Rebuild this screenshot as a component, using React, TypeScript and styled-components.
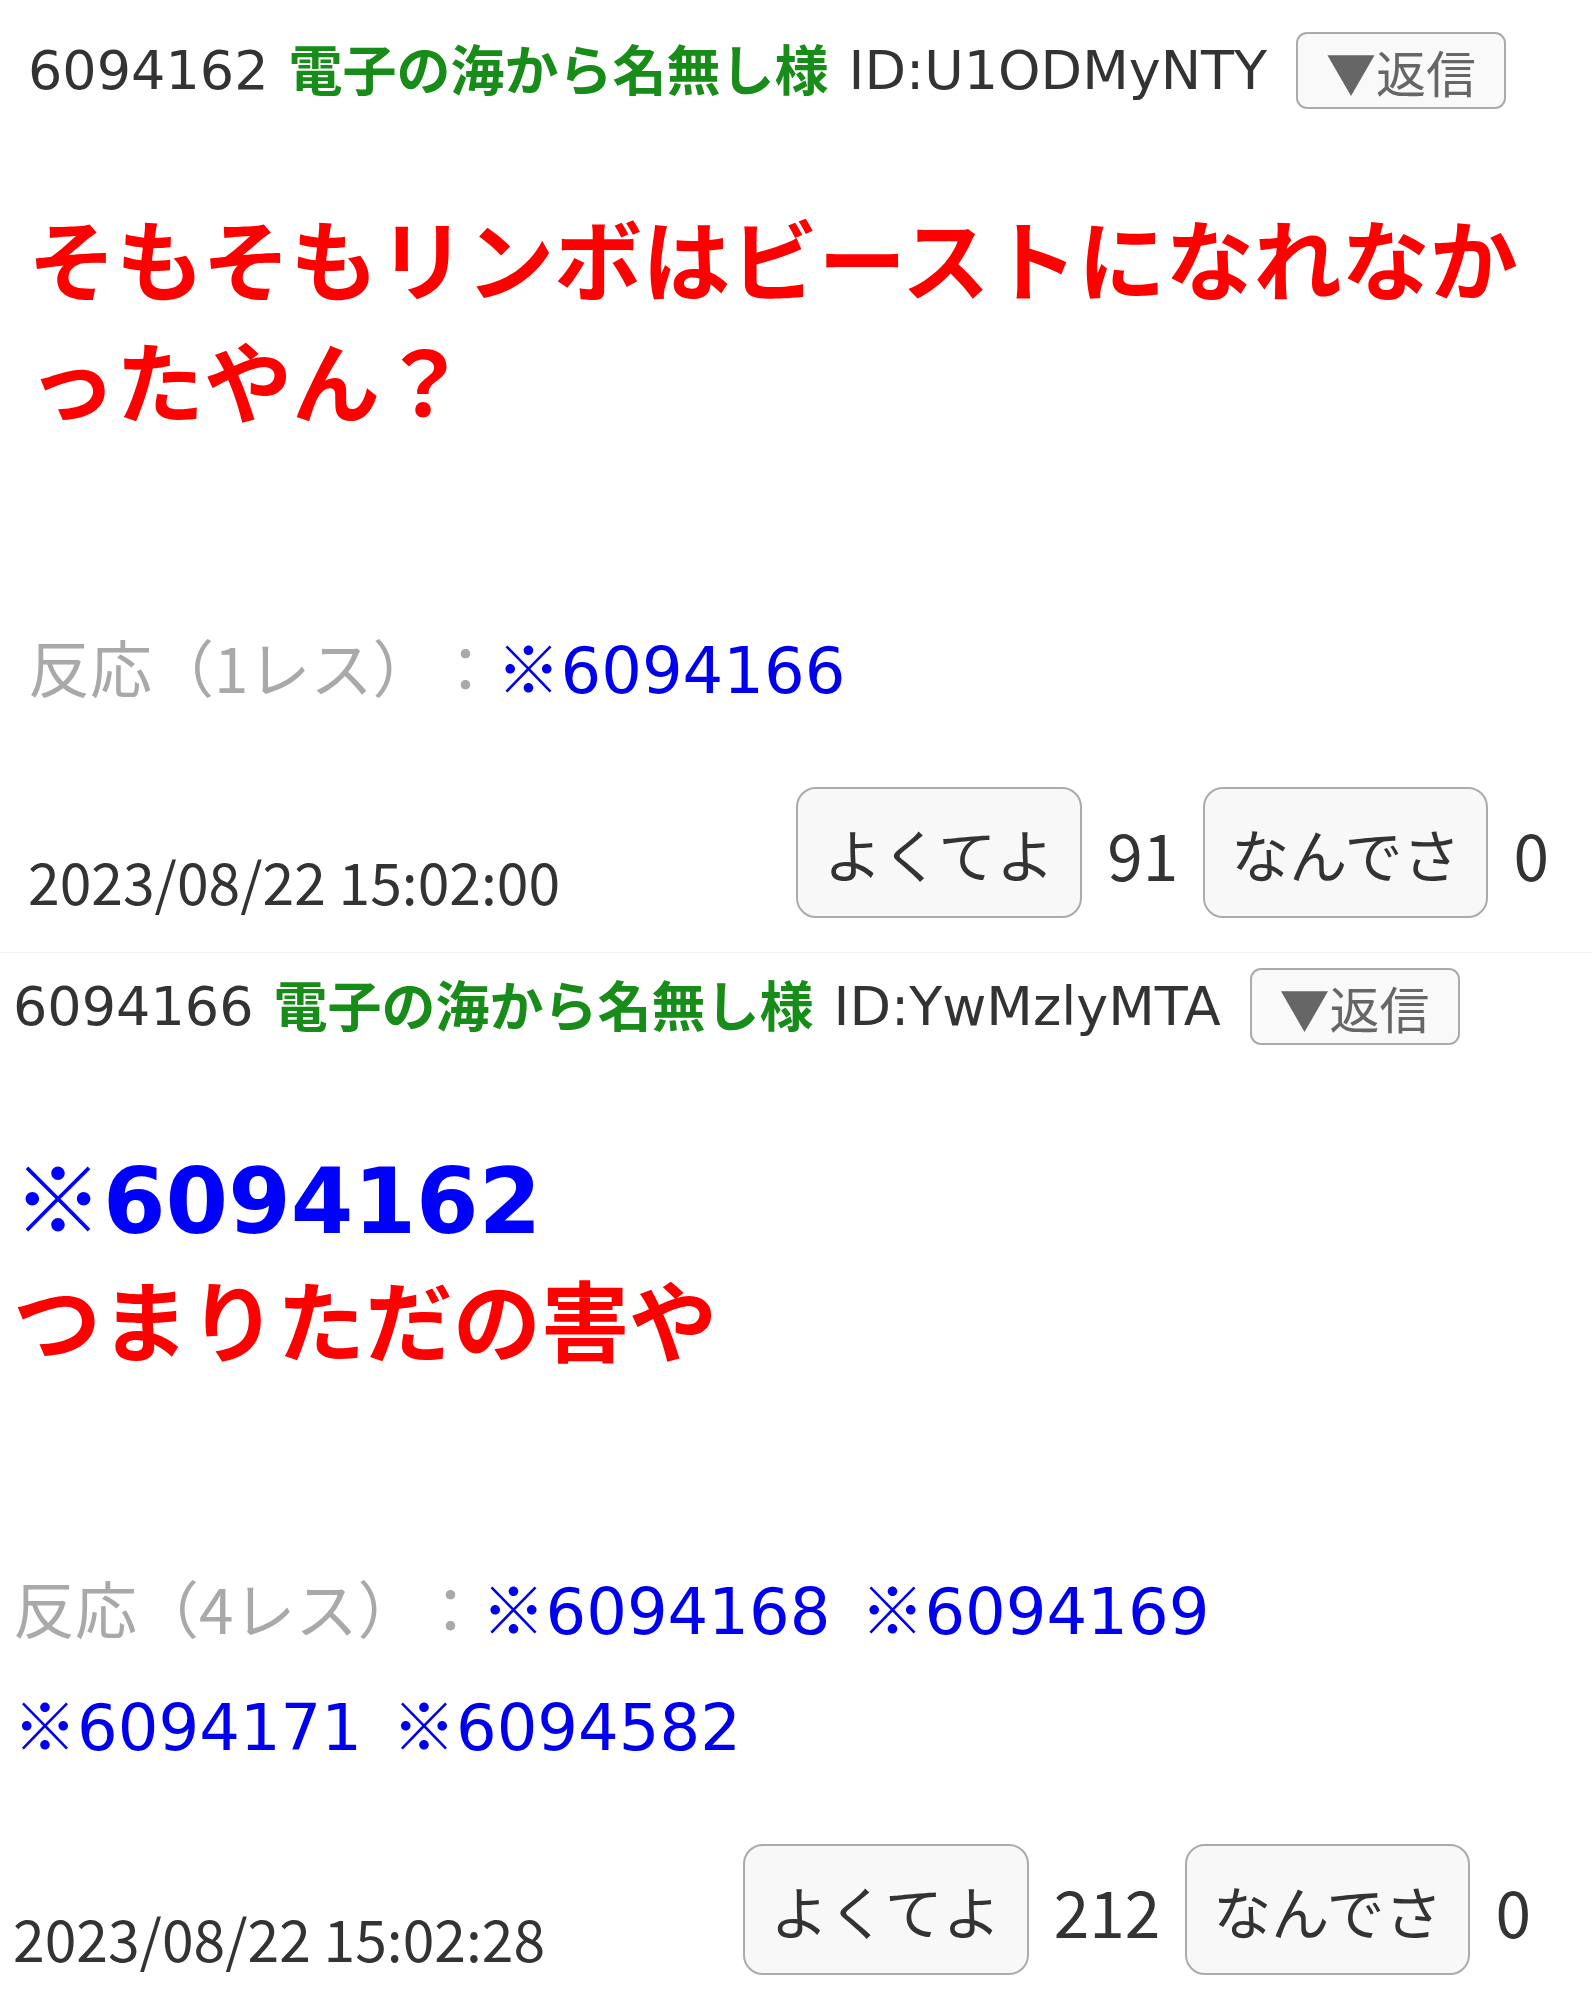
import React from "react";
import styled, { createGlobalStyle } from "styled-components";

const LATIN = `"DejaVu Sans", "Noto Sans CJK JP", sans-serif`;
const CJK = `"Noto Sans CJK JP", sans-serif`;

const GlobalStyle = createGlobalStyle`
  html, body {
    margin: 0;
    padding: 0;
    background: #ffffff;
  }
  body {
    font-family: ${CJK};
    color: #333333;
    text-spacing-trim: space-all;
  }
  button {
    cursor: pointer;
  }
`;

const Page = styled.main`
  width: 1592px;
  display: flex;
  flex-direction: column;
`;

const Post = styled.article<{
  $left: number;
  $right: number;
  $top: number;
  $bottom: number;
  $divider?: boolean;
}>`
  padding: ${(p) => p.$top}px ${(p) => p.$right}px ${(p) => p.$bottom}px
    ${(p) => p.$left}px;
  border-top: ${(p) => (p.$divider ? "1px solid #f0f0f0" : "none")};
`;

const Header = styled.header`
  display: flex;
  align-items: center;
  gap: 20px;
  height: 77px;
  font-family: ${LATIN};
  font-size: 54px;
  color: #333333;
  white-space: nowrap;
`;

const ResNo = styled.span``;

const Name = styled.span`
  font-family: ${CJK};
  font-weight: 700;
  color: #188c18;
  position: relative;
  top: -3px;
`;

const UserId = styled.span``;

const ReplyButton = styled.button`
  margin-left: 9px;
  width: 210px;
  height: 77px;
  box-sizing: border-box;
  padding: 0;
  border: 2px solid #ababab;
  border-radius: 11px;
  background: #f9f9f9;
  display: flex;
  align-items: center;
  justify-content: center;
  font-family: ${CJK};
  font-size: 50px;
  line-height: 1;
  color: #666666;
`;

const Body = styled.div<{ $gap: number }>`
  margin-top: ${(p) => p.$gap}px;
  font-family: ${CJK};
  font-weight: 700;
  font-size: 88px;
  line-height: 122px;
  color: #ff0000;
  line-break: anywhere;
  word-break: break-all;
`;

const BigAnchor = styled.a`
  color: #0000ff;
  text-decoration: none;
  font-family: ${LATIN};
  font-weight: 700;
  font-size: 90px;
  line-height: 1;
`;

const Mark = styled.span`
  font-family: ${CJK};
  font-weight: 400;
`;

const Reactions = styled.div<{ $gap: number }>`
  margin-top: ${(p) => p.$gap}px;
  font-family: ${CJK};
  font-size: 62px;
  line-height: 116px;
  word-spacing: 16px;
`;

const ReactionLabel = styled.span`
  color: #a9a9a9;
`;

const ReactionLink = styled.a`
  color: #0000ee;
  text-decoration: none;
  font-family: ${LATIN};
  font-size: 64px;
  line-height: 1;
`;

const Footer = styled.footer`
  margin-top: 63px;
  display: flex;
  justify-content: space-between;
  align-items: flex-end;
`;

const Timestamp = styled.time`
  font-family: ${CJK};
  font-size: 57px;
  line-height: 72px;
  color: #333333;
  margin-bottom: 2px;
`;

const Votes = styled.div`
  display: flex;
  align-items: center;
  gap: 25px;
`;

const VoteButton = styled.button`
  height: 131px;
  box-sizing: border-box;
  padding: 0 26px;
  border: 2px solid #ababab;
  border-radius: 20px;
  background: #f8f8f8;
  font-family: ${CJK};
  font-size: 58px;
  line-height: 1;
  color: #333333;
`;

const VoteCount = styled.span`
  font-family: ${CJK};
  font-size: 64px;
  color: #333333;
`;

type PostData = {
  no: string;
  id: string;
  quote?: string;
  lines: string[];
  reactions: string[];
  date: string;
  good: number;
  bad: number;
  left: number;
  right: number;
  top: number;
  bottom: number;
  divider?: boolean;
  bodyGap: number;
  reactGap: number;
};

const posts: PostData[] = [
  {
    no: "6094162",
    id: "ID:U1ODMyNTY",
    lines: ["そもそもリンボはビーストになれなかったやん？"],
    reactions: ["6094166"],
    date: "2023/08/22 15:02:00",
    good: 91,
    bad: 0,
    left: 28,
    right: 43,
    top: 32,
    bottom: 34,
    bodyGap: 86,
    reactGap: 169,
  },
  {
    no: "6094166",
    id: "ID:YwMzlyMTA",
    quote: "6094162",
    lines: ["つまりただの害や"],
    reactions: ["6094168", "6094169", "6094171", "6094582"],
    date: "2023/08/22 15:02:28",
    good: 212,
    bad: 0,
    left: 13,
    right: 61,
    top: 15,
    bottom: 27,
    divider: true,
    bodyGap: 89,
    reactGap: 171,
  },
];

function PostView({ post }: { post: PostData }) {
  return (
    <Post
      $left={post.left}
      $right={post.right}
      $top={post.top}
      $bottom={post.bottom}
      $divider={post.divider}
    >
      <Header>
        <ResNo>{post.no}</ResNo>
        <Name>電子の海から名無し様</Name>
        <UserId>{post.id}</UserId>
        <ReplyButton type="button">▼返信</ReplyButton>
      </Header>
      <Body $gap={post.bodyGap}>
        {post.quote && (
          <>
            <BigAnchor href={`#${post.quote}`}>
              <Mark>※</Mark>
              {post.quote}
            </BigAnchor>
            <br />
          </>
        )}
        {post.lines.map((l, i) => (
          <React.Fragment key={i}>
            {i > 0 && <br />}
            {l}
          </React.Fragment>
        ))}
      </Body>
      <Reactions $gap={post.reactGap}>
        <ReactionLabel>反応（{post.reactions.length}レス）：</ReactionLabel>
        {post.reactions.map((r, i) => (
          <React.Fragment key={r}>
            {i > 0 && " "}
            <ReactionLink href={`#${r}`}>
              <Mark>※</Mark>
              {r}
            </ReactionLink>
          </React.Fragment>
        ))}
      </Reactions>
      <Footer>
        <Timestamp>{post.date}</Timestamp>
        <Votes>
          <VoteButton type="button">よくてよ</VoteButton>
          <VoteCount>{post.good}</VoteCount>
          <VoteButton type="button">なんでさ</VoteButton>
          <VoteCount>{post.bad}</VoteCount>
        </Votes>
      </Footer>
    </Post>
  );
}

export default function App() {
  return (
    <>
      <GlobalStyle />
      <Page>
        {posts.map((p) => (
          <PostView key={p.no} post={p} />
        ))}
      </Page>
    </>
  );
}
